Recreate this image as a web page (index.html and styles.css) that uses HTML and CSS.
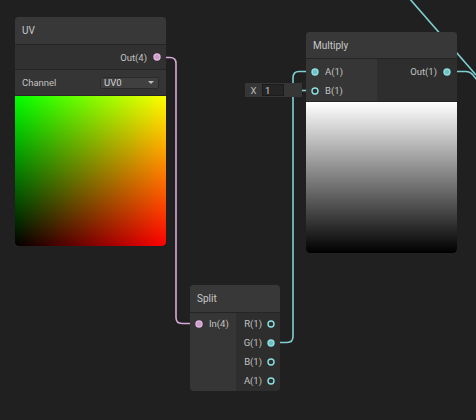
FILE: index.html
```html
<!DOCTYPE html>
<html>
<head>
<meta charset="utf-8">
<link rel="stylesheet" href="styles.css">
</head>
<body>
<div class="canvas">
  <svg class="wires" width="476" height="420" viewBox="0 0 476 420">
    <path class="w-pink" d="M157 57.5 H170 Q176 57.5 176 63.5 V317.5 Q176 323.5 182 323.5 H199"/>
    <path class="w-teal" d="M271 342.5 H287 Q293 342.5 293 336.5 V78 Q293 71.5 299 71.5 H315"/>
    <path class="w-teal" d="M295 90.5 H315"/>
    <circle cx="295" cy="90.5" r="2" fill="#86d6d8"/>
    <path class="w-teal" d="M409 -2 L476 75"/>
    <path class="w-teal" d="M447 71.5 H466 Q470 71.5 473 75 L477 80"/>
  </svg>

  <div class="node uv">
    <div class="title">UV</div>
    <div class="row-out">
      <span>Out(4)</span>
      <svg class="port" width="8" height="8" viewBox="0 0 8 8"><circle cx="4" cy="4" r="3" class="p-pink on"/></svg>
    </div>
    <div class="row-ctl">
      <span>Channel</span>
      <div class="dropdown"><span>UV0</span><span class="caret"></span></div>
    </div>
    <div class="preview uvgrad"></div>
  </div>

  <div class="field">
    <span class="flabel">X</span>
    <span class="finput">1</span>
  </div>

  <div class="node mul">
    <div class="title">Multiply</div>
    <div class="io">
      <div class="ins">
        <div class="slot"><svg class="port" width="8" height="8" viewBox="0 0 8 8"><circle cx="4" cy="4" r="3" class="p-teal on"/></svg><span>A(1)</span></div>
        <div class="slot"><svg class="port" width="8" height="8" viewBox="0 0 8 8"><circle cx="4" cy="4" r="3" class="p-teal"/></svg><span>B(1)</span></div>
      </div>
      <div class="outs">
        <div class="slot right"><span>Out(1)</span><svg class="port" width="8" height="8" viewBox="0 0 8 8"><circle cx="4" cy="4" r="3" class="p-teal on"/></svg></div>
      </div>
    </div>
    <div class="preview graygrad"></div>
  </div>

  <div class="node split">
    <div class="title">Split</div>
    <div class="io">
      <div class="ins">
        <div class="slot"><svg class="port" width="8" height="8" viewBox="0 0 8 8"><circle cx="4" cy="4" r="3" class="p-pink on"/></svg><span>In(4)</span></div>
      </div>
      <div class="outs">
        <div class="slot right"><span>R(1)</span><svg class="port" width="8" height="8" viewBox="0 0 8 8"><circle cx="4" cy="4" r="3" class="p-teal"/></svg></div>
        <div class="slot right"><span>G(1)</span><svg class="port" width="8" height="8" viewBox="0 0 8 8"><circle cx="4" cy="4" r="3" class="p-teal on"/></svg></div>
        <div class="slot right"><span>B(1)</span><svg class="port" width="8" height="8" viewBox="0 0 8 8"><circle cx="4" cy="4" r="3" class="p-teal"/></svg></div>
        <div class="slot right"><span>A(1)</span><svg class="port" width="8" height="8" viewBox="0 0 8 8"><circle cx="4" cy="4" r="3" class="p-teal"/></svg></div>
      </div>
    </div>
  </div>
</div>
</body>
</html>
```
FILE: styles.css
```css
* { box-sizing: border-box; }
html, body { margin: 0; padding: 0; }
body {
  background: #202020;
  font-family: Roboto, "Liberation Sans", sans-serif;
  font-size: 9.5px;
  color: #c2c2c2;
}
.canvas { position: relative; width: 476px; height: 420px; overflow: hidden; }
.wires { position: absolute; left: 0; top: 0; }
.wires path { fill: none; stroke-width: 1.6; }
.w-pink { stroke: #d7a8d6; }
.w-teal { stroke: #7fcfd1; }

.node {
  position: absolute;
  background: #2e2e2e;
  border-radius: 4px;
  overflow: hidden;
}
.title {
  height: 27px;
  background: rgba(58, 58, 58, 0.88);
  display: flex;
  align-items: center;
  padding-left: 7px;
  font-size: 10px;
  color: #c8c8c8;
}
.port { display: block; flex: none; }
.port circle { stroke-width: 1.4; fill: #2e2e2e; }
.p-pink { stroke: #e2b3e0; }
.p-teal { stroke: #8ae0e2; }
.p-pink.on { fill: #c99ec8; }
.p-teal.on { fill: #72bfc1; }

/* UV node */
.uv { left: 15px; top: 17px; width: 151px; }
.row-out {
  height: 25px;
  border-top: 1px solid #252525;
  background: #313131;
  display: flex;
  align-items: center;
  justify-content: flex-end;
  gap: 6px;
  padding-right: 5px;
}
.row-ctl {
  height: 26px;
  border-top: 1px solid #252525;
  background: #353535;
  display: flex;
  align-items: center;
  justify-content: space-between;
  padding: 0 7px;
}
.dropdown {
  width: 59px;
  height: 12px;
  background: #404040;
  border: 1px solid #2a2a2a;
  border-radius: 2px;
  display: flex;
  align-items: center;
  justify-content: space-between;
  padding: 0 4px 0 3px;
  color: #d6d6d6;
}
.caret {
  width: 0; height: 0;
  border-left: 3px solid transparent;
  border-right: 3px solid transparent;
  border-top: 3px solid #bdbdbd;
}
.preview { border-top: 1px solid #252525; border-radius: 0 0 4px 4px; }
.uv .preview { height: 151px; }
.uvgrad {
  background-image: linear-gradient(to right, #000, #f00), linear-gradient(to top, #000, #0f0);
  background-blend-mode: screen;
}
.graygrad { background: linear-gradient(to bottom, #fff, #000); }

/* Multiply */
.mul { left: 306px; top: 32px; width: 151px; }
.mul .title { height: 26px; }
.io { display: flex; border-top: 1px solid #252525; }
.ins { background: #363636; padding-top: 3px; }
.outs { flex: 1; background: #2e2e2e; padding-top: 3px; }
.mul .io { height: 43px; }
.mul .ins { width: 71px; }
.slot {
  height: 19px;
  display: flex;
  align-items: center;
  gap: 6px;
  padding-left: 5px;
}
.slot.right { justify-content: flex-end; padding-left: 0; padding-right: 6px; gap: 6px; }
.mul .preview { height: 152px; }

/* Split */
.split { left: 190px; top: 285px; width: 90px; }
.split .io { height: 79px; }
.split .ins { width: 46px; padding-top: 1px; }
.split .outs { padding-top: 1px; }
.split .slot.right { padding-right: 5px; gap: 5px; }

/* X field */
.field {
  position: absolute;
  left: 245px; top: 83px;
  width: 57px; height: 14px;
  background: #363636;
  display: flex;
  align-items: center;
}
.flabel { width: 17px; text-align: center; color: #bdbdbd; }
.finput {
  width: 22px; height: 12px;
  background: #252525;
  border: 1px solid #1c1c1c;
  display: flex; align-items: center;
  padding-left: 2px;
  color: #cfcfcf;
}
```
